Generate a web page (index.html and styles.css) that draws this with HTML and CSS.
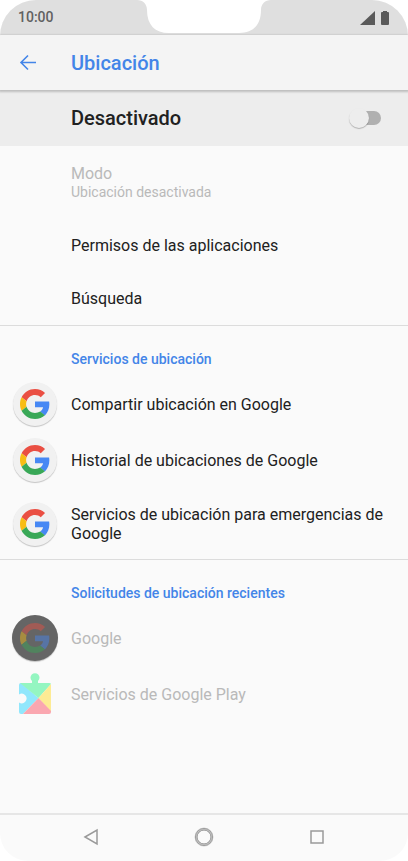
FILE: index.html
```html
<!DOCTYPE html>
<html lang="es">
<head>
<meta charset="utf-8">
<meta name="viewport" content="width=device-width, initial-scale=1">
<title>Ubicación</title>
<link rel="stylesheet" href="styles.css">
</head>
<body>
<svg class="defs" aria-hidden="true">
  <symbol id="g-logo" viewBox="0 0 48 48">
    <path fill="#ea4f43" d="M24 9.5c3.54 0 6.71 1.22 9.21 3.6l6.85-6.85C35.9 2.38 30.47 0 24 0 14.62 0 6.51 5.38 2.56 13.22l7.98 6.19C12.43 13.72 17.74 9.5 24 9.5z"/>
    <path fill="#4788f4" d="M46.98 24.55c0-1.57-.15-3.09-.38-4.55H24v9.02h12.94c-.58 2.96-2.26 5.48-4.78 7.18l7.73 6c4.51-4.18 7.09-10.36 7.09-17.65z"/>
    <path fill="#f8bd15" d="M10.53 28.59c-.48-1.45-.76-2.99-.76-4.59s.27-3.14.76-4.59l-7.98-6.19C.92 16.46 0 20.12 0 24c0 3.88.92 7.54 2.56 10.78l7.97-6.19z"/>
    <path fill="#39a857" d="M24 48c6.48 0 11.93-2.13 15.89-5.81l-7.73-6c-2.15 1.45-4.92 2.3-8.16 2.3-6.26 0-11.57-4.22-13.47-9.91l-7.98 6.19C6.51 42.62 14.62 48 24 48z"/>
  </symbol>
</svg>
<div class="phone">
  <div class="status">
    <span class="clock">10:00</span>
    <svg class="notch" viewBox="0 0 134 34" aria-hidden="true"><path fill="#fff" d="M0 0C6 0 10 4 10 10C10 25 18 33 32 33H102C116 33 124 25 124 10C124 4 128 0 134 0Z"/></svg>
    <svg class="signals" viewBox="0 0 32 16" aria-hidden="true"><path fill="#5a5a5a" d="M0 15L15 1V15Z"/><path fill="#5a5a5a" d="M23 2V1H27V2H28Q29 2 29 3V14Q29 15 28 15H22Q21 15 21 14V3Q21 2 22 2Z"/></svg>
  </div>
  <header class="appbar">
    <button class="back" type="button" aria-label="Atrás"><svg viewBox="0 0 18 18" aria-hidden="true"><path fill="none" stroke="currentColor" stroke-width="1.600" d="M17 8.500H2M9 1.500L2 8.500L9 15.500"/></svg></button>
    <h1>Ubicación</h1>
  </header>
  <main>
    <div class="master">
      <label for="location">Desactivado</label>
      <input class="switch" id="location" type="checkbox" role="switch">
    </div>
    <ul class="group">
      <li class="row mode off"><div class="text">Modo<small>Ubicación desactivada</small></div></li>
      <li class="row plain"><div class="text">Permisos de las aplicaciones</div></li>
      <li class="row plain"><div class="text">Búsqueda</div></li>
    </ul>
    <section class="group">
      <h2>Servicios de ubicación</h2>
      <ul>
        <li class="row"><span class="icon disc"><svg><use href="#g-logo"/></svg></span><div class="text">Compartir ubicación en Google</div></li>
        <li class="row"><span class="icon disc"><svg><use href="#g-logo"/></svg></span><div class="text">Historial de ubicaciones de Google</div></li>
        <li class="row double"><span class="icon disc"><svg><use href="#g-logo"/></svg></span><div class="text">Servicios de ubicación para emergencias de Google</div></li>
      </ul>
    </section>
    <section class="group last">
      <h2>Solicitudes de ubicación recientes</h2>
      <ul>
        <li class="row off"><span class="icon disc dark"><svg><use href="#g-logo"/></svg></span><div class="text">Google</div></li>
        <li class="row off"><span class="icon play"><svg viewBox="0 0 34 44" aria-hidden="true">
          <path fill="#91e7fc" d="M3 11L20.500 26L5 42H3Q1 42 1 40V30.500A4.800 4.800 0 1 0 1 22.500V13Q1 11 3 11Z"/>
          <path fill="#94f6c1" d="M2 11H14V9A4.500 4.500 0 1 1 20 9V11H31Q33 11 33 12L20.500 26Z"/>
          <path fill="#fdeb94" d="M20.500 26L33 12V40Z"/>
          <path fill="#faa7b0" d="M20.500 26L33 39V40Q33 42 31 42H5Z"/>
        </svg></span><div class="text">Servicios de Google Play</div></li>
      </ul>
    </section>
  </main>
  <nav class="nav" aria-label="Sistema">
    <button type="button" aria-label="Atrás"><svg viewBox="0 0 20 20" aria-hidden="true"><path d="M4 10L16 3V17Z"/></svg></button>
    <button type="button" aria-label="Inicio"><svg viewBox="0 0 20 20" aria-hidden="true"><circle class="halo" cx="10" cy="10" r="8"/><circle class="ring" cx="10" cy="10" r="7"/><circle class="ring" cx="10" cy="10" r="8.500"/></svg></button>
    <button type="button" aria-label="Recientes"><svg viewBox="0 0 20 20" aria-hidden="true"><path d="M4 4H16V16H4Z"/></svg></button>
  </nav>
</div>
</body>
</html>
```
FILE: styles.css
```css
* { box-sizing: border-box; }
body {
  margin: 0;
  background: #fff;
  color: #212121;
  font: 16px/19px Roboto, sans-serif;
}
.defs { position: absolute; width: 0; height: 0; }
h1, h2, ul { margin: 0; padding: 0; }
ul { list-style: none; }
button { padding: 0; border: 0; background: none; }
svg { display: block; }

.phone {
  display: flex;
  flex-direction: column;
  min-height: 100vh;
  overflow: hidden;
  border-radius: 36px 36px 28px 28px;
  background: #fafafa;
}
.status {
  display: grid;
  grid-template-columns: 1fr 134px 1fr;
  height: 35px;
  background: #dfdfdf;
}
.clock {
  align-self: center;
  padding-left: 18px;
  color: #616161;
  font-size: 14px;
  font-weight: 500;
}
.notch { width: 134px; height: 34px; }
.signals {
  align-self: center;
  justify-self: end;
  width: 32px;
  height: 16px;
  margin-right: 16px;
}
.appbar {
  position: relative;
  display: flex;
  align-items: center;
  height: 55px;
  background: #f4f4f4;
  box-shadow: 0 1px 2px 1px rgba(0, 0, 0, .2);
  color: #4385e8;
}
.back { width: 71px; padding-left: 19px; color: inherit; }
.back svg { width: 18px; height: 18px; }
h1 { font-size: 20px; line-height: 24px; font-weight: 500; }
.master {
  display: flex;
  align-items: center;
  justify-content: space-between;
  height: 56px;
  padding: 0 27px 0 71px;
  background: #ededed;
  font-size: 20px;
  line-height: 24px;
  font-weight: 500;
}
.switch {
  position: relative;
  appearance: none;
  width: 30px;
  height: 14px;
  margin: 0;
  border-radius: 7px;
  background: linear-gradient(90deg, transparent 10px, #b0b0b0 10px);
}
.switch::before {
  content: "";
  position: absolute;
  top: -3px;
  left: -2px;
  width: 20px;
  height: 20px;
  border-radius: 50%;
  background: #ededed;
  box-shadow: 0 1px 1px rgba(0, 0, 0, .25);
}
.switch:checked { background: #a1c2f4; }
.switch:checked::before { left: 12px; background: #4385e8; }

.group { border-bottom: 1px solid #dcdcdc; }
.last { border-bottom: 0; }
.row {
  display: flex;
  align-items: center;
  min-height: 56px;
  padding: 0 24px 0 12px;
}
.plain { min-height: 53px; }
.mode { min-height: 73px; }
.double { min-height: 71px; }
.plain, .mode { padding-left: 71px; }
.off { color: #b9b9b9; }
small { display: block; font-size: 14px; }
h2 {
  padding: 24px 24px 8px 71px;
  color: #4385e8;
  font-size: 14px;
  font-weight: 500;
  line-height: 18px;
}
.icon {
  display: grid;
  flex: none;
  place-items: center;
  width: 44px;
  height: 44px;
  margin: 0 14px 0 1px;
}
.disc {
  border-radius: 50%;
  background: #f1f1f1;
  box-shadow: 0 1px 1px rgba(0, 0, 0, .22);
}
.disc svg { width: 30px; height: 30px; }
.dark {
  width: 46px;
  height: 46px;
  margin: 0 13px 0 0;
  background: #656565;
}
.dark svg { opacity: .45; }
.play svg { width: 34px; height: 44px; }

.nav {
  display: grid;
  grid-template-columns: repeat(3, 1fr);
  align-items: start;
  height: 48px;
  margin-top: auto;
  padding: 0 35px;
  border-top: 2px solid #e6e6e6;
}
.nav button { display: grid; place-items: center; height: 44px; }
.nav svg {
  width: 20px;
  height: 20px;
  fill: none;
  stroke: #9a9a9a;
  stroke-width: 1.5;
}
.nav .halo { stroke: #d2d2d2; stroke-width: 3; }
.nav .ring { stroke-width: 1; }
```
